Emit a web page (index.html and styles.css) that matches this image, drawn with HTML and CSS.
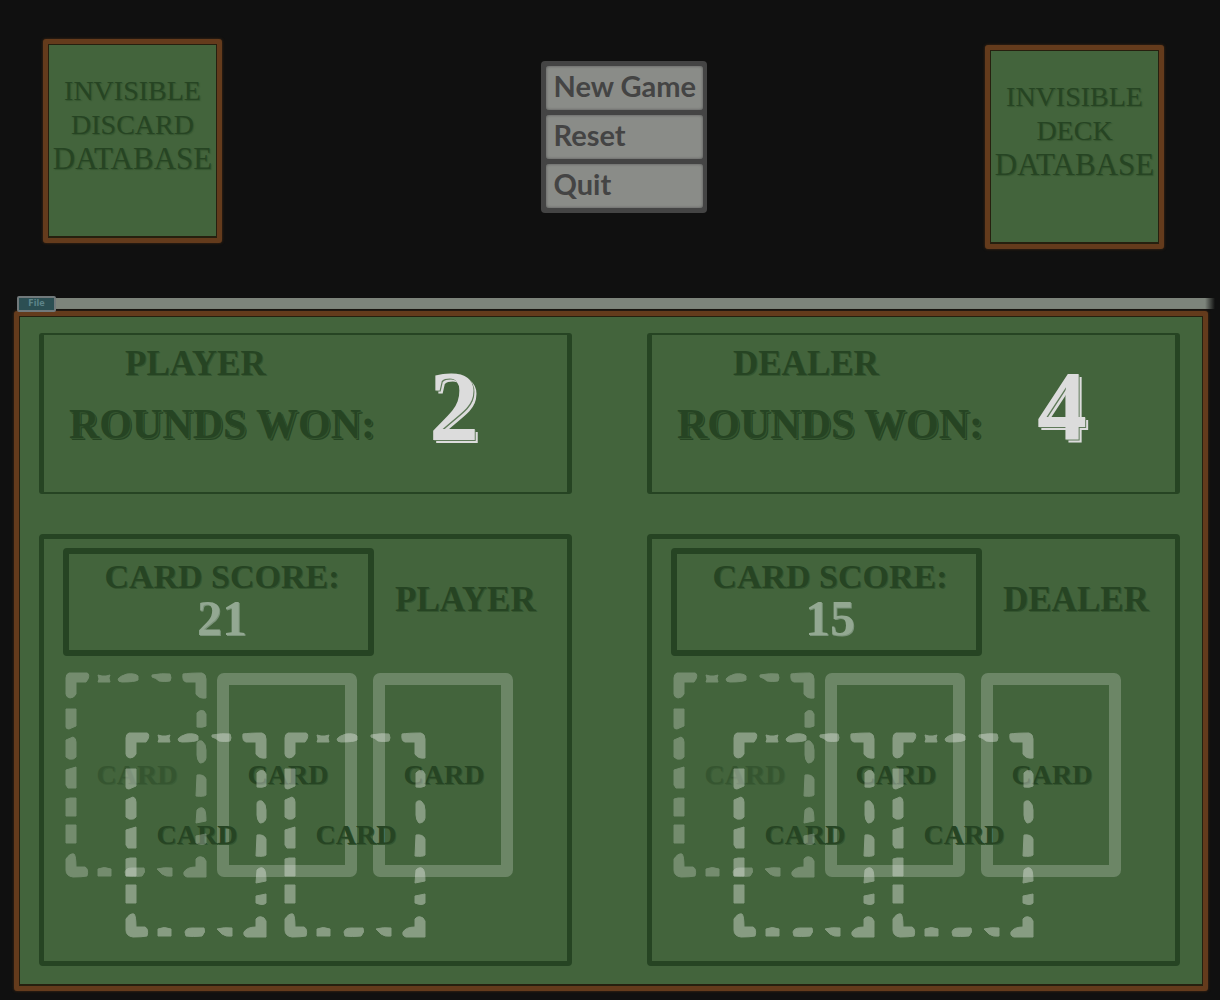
FILE: index.html
```html
<!DOCTYPE html>
<html lang="en">
<head>
<meta charset="utf-8">
<title>Blackjack table</title>
<link rel="stylesheet" href="styles.css">
</head>
<body>
<svg class="defs" aria-hidden="true">
  <symbol id="dashes" viewBox="0 0 142 206">
    <path d="M4 1H22Q25 2 23 7L21 10H11V22Q9 26 5 26Q1 25 1 22V6Q1 2 4 1Z"/>
    <path d="M33 3L37 4H41L45 3L44 6L45 10H33L34 7Z"/>
    <path d="M53 7Q55 4 62 2Q70 1 73 4V8Q70 10 57 10Q53 10 53 7Z"/>
    <path d="M87 3Q97 1 105 2Q107 6 105 9Q100 10 94 9Q91 6 87 5Z"/>
    <path d="M118 2Q124 1 137 1Q141 2 141 7V26Q134 27 131 22V10H121Q117 9 118 2Z"/>
    <path d="M1 37H11V54L4 57Q1 57 1 55Z"/>
    <path d="M1 68L8 65Q11 66 11 70V85Q9 88 4 87L1 85Z"/>
    <path d="M1 98L11 95V116H3L1 113Z"/>
    <path d="M1 127L5 126H11V144H1Z"/>
    <path d="M1 153H11V171H1Z"/>
    <path d="M1 187Q5 181 9 182Q11 184 11 195H20Q24 197 22 204Q17 205 8 205Q1 204 1 198Z"/>
    <path d="M33 197Q39 194 46 197V204H33Z"/>
    <path d="M60 200Q61 196 67 196H79Q81 200 77 204Q68 205 61 204Z"/>
    <path d="M92 197Q99 195 107 196V204Q101 205 97 202Z"/>
    <path d="M119 200Q122 195 131 195V187Q134 183 139 186L141 189V205H122Q118 204 119 200Z"/>
    <path d="M132 41Q135 37 139 39L141 42V54Q138 56 132 55Z"/>
    <path d="M132 72Q132 68 137 69Q141 72 141 78V86Q140 91 135 91Q132 88 132 83Z"/>
    <path d="M132 103Q139 102 141 107V123Q139 125 131 124Z"/>
    <path d="M132 138Q136 134 139 137Q141 139 141 149L131 151Z"/>
    <path d="M131 164Q136 163 141 162V171Q138 174 131 171Z"/>
  </symbol>
</svg>

<header class="top">
  <section class="database">Invisible<br>Discard<br><span class="wide">Database</span></section>
  <nav class="menu" aria-label="Game">
    <button type="button">New Game</button>
    <button type="button">Reset</button>
    <button type="button">Quit</button>
  </nav>
  <section class="database database-deck">Invisible<br>Deck<br><span class="wide">Database</span></section>
</header>

<div class="menubar"><button type="button" class="file">File</button></div>

<main class="board">
  <section class="side">
    <div class="stats">
      <div>
        <h2 class="name">PLAYER</h2>
        <p class="rounds">ROUNDS WON:</p>
      </div>
      <output class="wins">2</output>
    </div>
    <div class="hand">
      <div class="summary">
        <div class="score"><p>CARD SCORE:</p><output>21</output></div>
        <h2>PLAYER</h2>
      </div>
      <div class="cards">
        <div class="row">
          <div class="card faint"><svg><use href="#dashes"/></svg><span>CARD</span></div>
          <div class="card solid"><span>CARD</span></div>
          <div class="card solid last"><span>CARD</span></div>
        </div>
        <div class="row over">
          <div class="card"><svg><use href="#dashes"/></svg><span>CARD</span></div>
          <div class="card"><svg><use href="#dashes"/></svg><span>CARD</span></div>
        </div>
      </div>
    </div>
  </section>

  <section class="side">
    <div class="stats">
      <div>
        <h2 class="name">DEALER</h2>
        <p class="rounds">ROUNDS WON:</p>
      </div>
      <output class="wins">4</output>
    </div>
    <div class="hand">
      <div class="summary">
        <div class="score"><p>CARD SCORE:</p><output>15</output></div>
        <h2>DEALER</h2>
      </div>
      <div class="cards">
        <div class="row">
          <div class="card faint"><svg><use href="#dashes"/></svg><span>CARD</span></div>
          <div class="card solid"><span>CARD</span></div>
          <div class="card solid last"><span>CARD</span></div>
        </div>
        <div class="row over">
          <div class="card"><svg><use href="#dashes"/></svg><span>CARD</span></div>
          <div class="card"><svg><use href="#dashes"/></svg><span>CARD</span></div>
        </div>
      </div>
    </div>
  </section>
</main>
</body>
</html>
```
FILE: styles.css
```css
:root {
  --felt: #43643c;
  --ink: #264423;
  --wood: #643b1c;
  --night: #101010;
}

* { box-sizing: border-box; }

body {
  margin: 0;
  background: var(--night);
  color: var(--ink);
  font-family: Algerian, "Liberation Serif", serif;
}

h2, p { margin: 0; }

.defs { display: none; }

.top {
  display: grid;
  grid-template-columns: 179px 1fr 179px;
  align-items: start;
  padding: 39px 56px 49px 43px;
}

.database {
  min-height: 204px;
  padding: 30px 0 0;
  border: 5px solid var(--wood);
  border-radius: 3px;
  background: var(--felt);
  box-shadow: inset 0 0 0 1px #26200f, inset 0 -2px 0 #26200f, 0 0 3px #4a2c14;
  font-size: 28px;
  line-height: 34px;
  text-align: center;
  text-transform: uppercase;
  text-shadow: 1px 1px 1px #35552f;
}

.database-deck { margin-top: 6px; }

.wide { font-size: 31px; }

.menu {
  display: grid;
  gap: 5px;
  justify-self: center;
  width: 166px;
  margin: 22px 0 0 40px;
  padding: 5px 4px 5px 5px;
  border-radius: 4px;
  background: #444;
}

.menu button {
  height: 44px;
  padding: 0 0 4px 8px;
  border: 0;
  border-radius: 3px;
  background: #8a8c88;
  box-shadow: inset 0 0 3px #555;
  color: #444;
  font: 700 29px/40px Lato, "Open Sans", sans-serif;
  text-align: left;
  white-space: nowrap;
}

.menubar {
  display: flex;
  align-items: center;
  height: 11px;
  margin: 0 5px 2px 17px;
  background: linear-gradient(to left, transparent, #7d847b 10px);
}

.file {
  flex: none;
  width: 39px;
  height: 16px;
  padding: 0;
  border: 2px solid #71797b;
  border-radius: 2px;
  background: #2c4f53;
  color: #5d8489;
  font: 700 8px/12px "DejaVu Sans", sans-serif;
}

.board {
  display: grid;
  grid-template-columns: 1fr 1fr;
  gap: 75px;
  margin: 0 12px 9px 14px;
  padding: 17px 23px 20px 20px;
  border: 5px solid var(--wood);
  border-radius: 3px;
  background: var(--felt);
  box-shadow: inset 0 0 0 1px #26200f, inset 0 -2px 0 #26200f, 0 0 3px #4a2c14;
}

.side {
  display: grid;
  gap: 40px;
}

.stats {
  display: flex;
  gap: 54px;
  min-height: 161px;
  padding: 9px 0 0 25px;
  border: solid var(--ink);
  border-width: 2px 5px;
  border-radius: 3px;
}

h2 {
  font-size: 35px;
  line-height: 40px;
  text-shadow: 1px 1px 0 #34552f;
}

.name { padding-left: 56px; }

.rounds {
  margin-top: 10px;
  font-size: 42px;
  font-weight: 700;
  line-height: 60px;
  white-space: nowrap;
  text-shadow: 1px 1px 0 #34552f, 2px 2px 0 var(--ink);
}

.wins {
  padding-top: 12px;
  color: #dcdcdc;
  font-size: 100px;
  font-weight: 700;
  line-height: 100px;
  text-shadow: 1px 1px 0 #5f7a59, 3px 3px 0 #dcdcdc;
}

.hand {
  padding: 9px 18px 24px 19px;
  border: 5px solid var(--ink);
  border-radius: 4px;
}

.summary {
  display: flex;
  align-items: center;
  gap: 21px;
}

.summary h2 { padding-bottom: 4px; }

.score {
  width: 311px;
  padding: 0 0 14px 7px;
  border: 6px solid var(--ink);
  border-radius: 4px;
  font-weight: 700;
  text-align: center;
}

.score p {
  font-size: 34px;
  line-height: 46px;
  text-shadow: 1px 1px 0 #34552f;
}

.score output {
  display: block;
  color: #93a892;
  font-size: 50px;
  line-height: 36px;
  text-shadow: 1px 1px 0 #7b937a;
}

.cards {
  display: grid;
  justify-content: start;
  padding: 17px 0 0 3px;
}

.row {
  display: flex;
  grid-area: 1 / 1;
  gap: 11px;
}

.over {
  gap: 19px;
  margin: 60px 0 0 60px;
}

.card {
  display: grid;
  grid-template-columns: 100%;
  grid-template-rows: 100%;
  place-items: center;
  width: 140px;
  height: 204px;
  font-size: 28px;
  font-weight: 700;
  line-height: 32px;
}

.card > * { grid-area: 1 / 1; }

.card span {
  padding-left: 2px;
  text-shadow: 1px 1px 0 #34552f;
}

.card svg {
  width: 142px;
  height: 206px;
  fill: #fff;
  stroke: #fff;
  stroke-linejoin: round;
  opacity: .36;
}

.solid {
  border: 12px solid rgb(255 255 255 / 22%);
  border-radius: 7px;
}

.last { margin-left: 5px; }

.faint { opacity: .72; }
.faint span { opacity: .6; }
```
